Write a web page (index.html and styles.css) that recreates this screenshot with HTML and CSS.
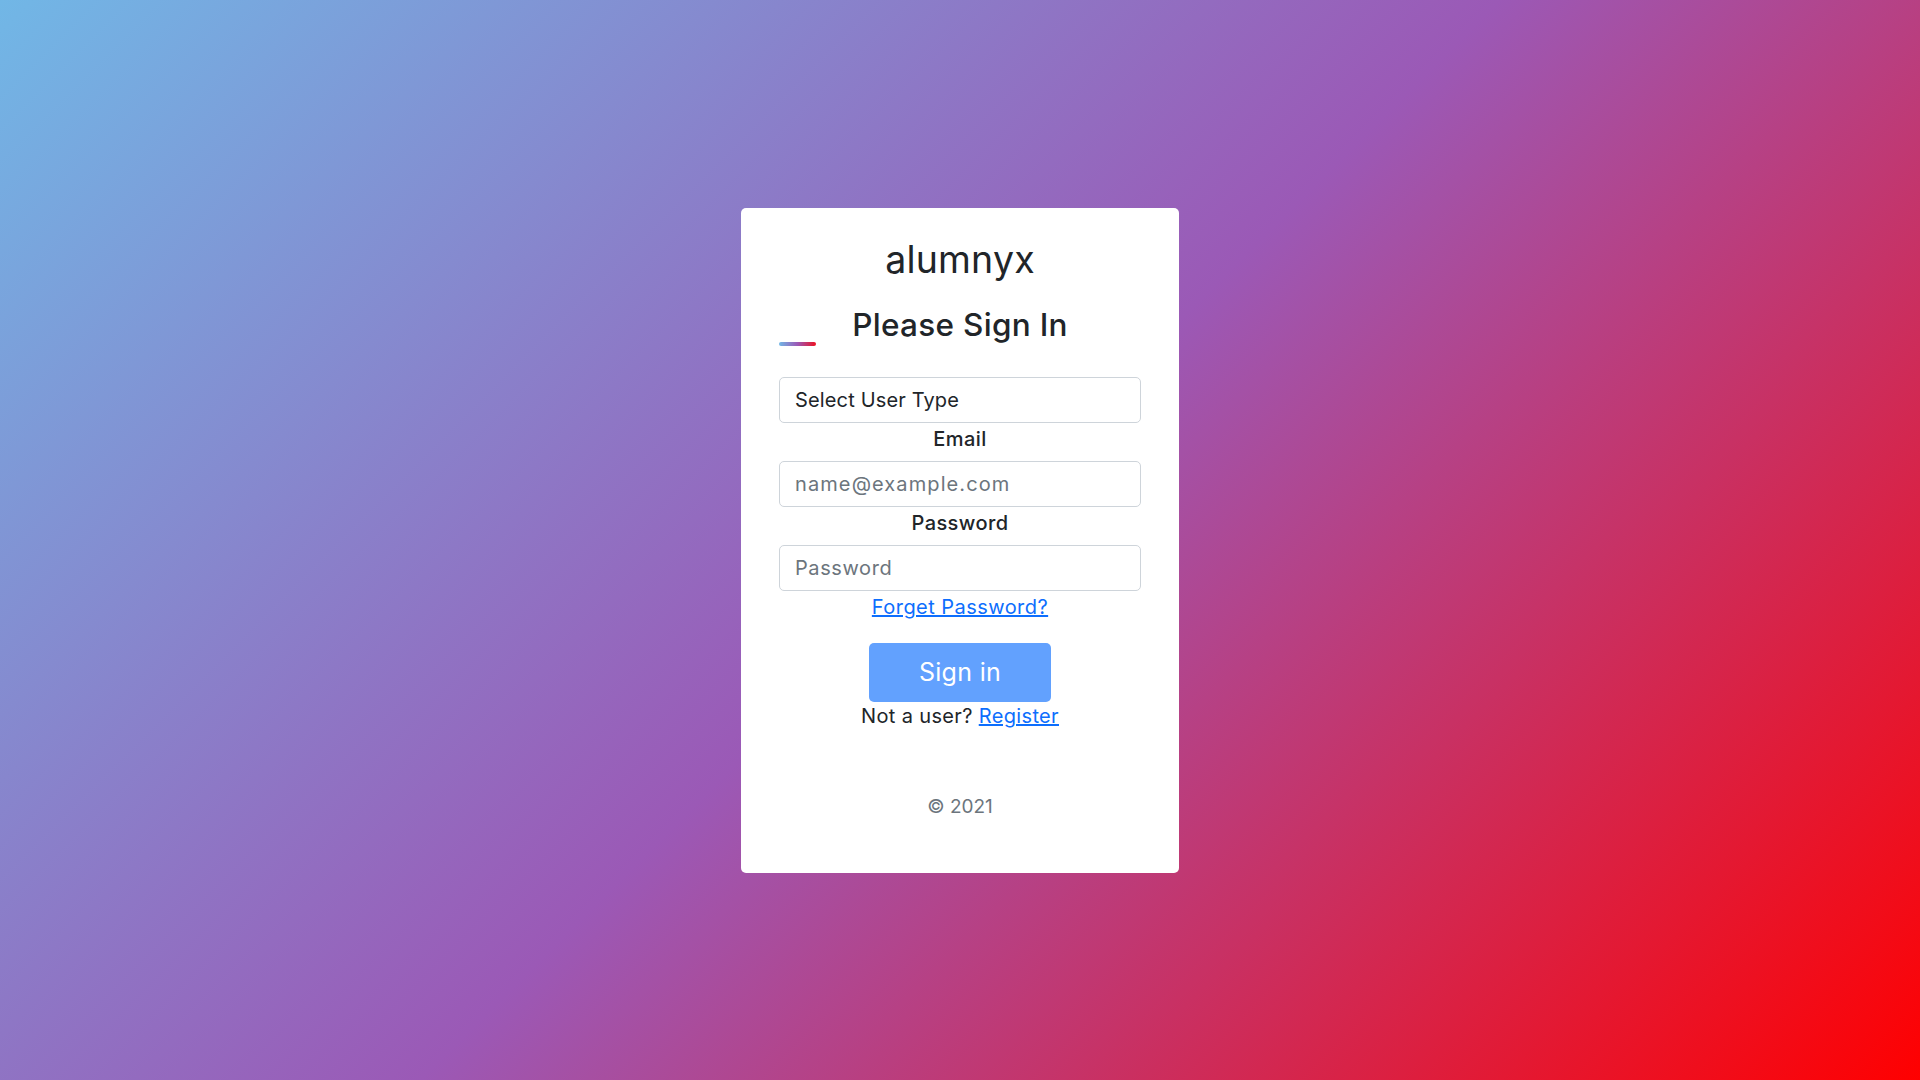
FILE: index.html
```html
<!DOCTYPE html>
<html lang="en">
<head>
<meta charset="utf-8">
<title>alumnyx - Sign In</title>
<link rel="stylesheet" href="styles.css">
</head>
<body>
<main class="page">
  <form class="card">
    <div class="brand">alumnyx</div>
    <h2 class="title">Please Sign In</h2>
    <select class="field field-select">
      <option>Select User Type</option>
    </select>
    <label class="label" for="email">Email</label>
    <input class="field field-email" id="email" type="email" placeholder="name@example.com">
    <label class="label" for="password">Password</label>
    <input class="field" id="password" type="password" placeholder="Password">
    <a class="link forget" href="#">Forget Password?</a>
    <button class="btn" type="button" disabled>Sign in</button>
    <p class="register">Not a user? <a class="link" href="#">Register</a></p>
    <p class="copy">© 2021</p>
  </form>
</main>
</body>
</html>
```

FILE: styles.css
```css
* { box-sizing: border-box; }

html, body {
  margin: 0;
  padding: 0;
  height: 100%;
}

body {
  font-family: Inter, "Noto Sans", sans-serif;
  color: #212529;
  background: linear-gradient(135deg, #71b7e6, #9b59b6, #ff0000);
}

.page {
  height: 100vh;
  display: flex;
  align-items: center;
  justify-content: center;
}

.card {
  width: 438px;
  background: #fff;
  border-radius: 5px;
  padding: 30px 38px 51px;
  display: flex;
  flex-direction: column;
  align-items: center;
}

.brand {
  font-size: 37.5px;
  line-height: 44px;
  font-weight: 400;
  letter-spacing: 0.2px;
  color: #212529;
}

.title {
  position: relative;
  align-self: stretch;
  margin: 22px 0 0;
  text-align: center;
  font-size: 31.5px;
  line-height: 42px;
  font-weight: 500;
  letter-spacing: 0.3px;
  color: #212529;
}

.title::before {
  content: "";
  position: absolute;
  left: 0;
  bottom: 0;
  width: 37px;
  height: 4px;
  border-radius: 2px;
  background: linear-gradient(to right, #71b7e6, #9b59b6, #ee1020);
}

.field {
  align-self: stretch;
  height: 46px;
  border: 1px solid #ced4da;
  border-radius: 5px;
  padding: 0 15px;
  font-family: inherit;
  font-size: 20px;
  letter-spacing: 0.15px;
  color: #212529;
  background: #fff;
  outline: none;
}

.field::placeholder {
  color: #6c757d;
  opacity: 1;
  letter-spacing: 0.6px;
}

.field-email::placeholder {
  letter-spacing: 1.1px;
}

.field-select {
  margin-top: 31px;
  -webkit-appearance: none;
  appearance: none;
}

.label {
  font-size: 20px;
  line-height: 30px;
  font-weight: 500;
  letter-spacing: 0.4px;
  margin: 1px 0 7px;
}

.link {
  color: #0d6efd;
  text-decoration: underline;
}

.forget {
  font-size: 20px;
  line-height: 30px;
  letter-spacing: 0.45px;
  margin-top: 1px;
}

.btn {
  margin-top: 21px;
  width: 182px;
  height: 59px;
  border: none;
  border-radius: 5px;
  background: #62a1fe;
  color: #fff;
  font-family: inherit;
  font-size: 25px;
  font-weight: 400;
  letter-spacing: 0.3px;
}

.register {
  margin: 0;
  font-size: 20px;
  line-height: 28px;
  letter-spacing: 0.35px;
}

.copy {
  margin: 62px 0 0;
  font-size: 19px;
  line-height: 30px;
  color: #6c757d;
}
```
